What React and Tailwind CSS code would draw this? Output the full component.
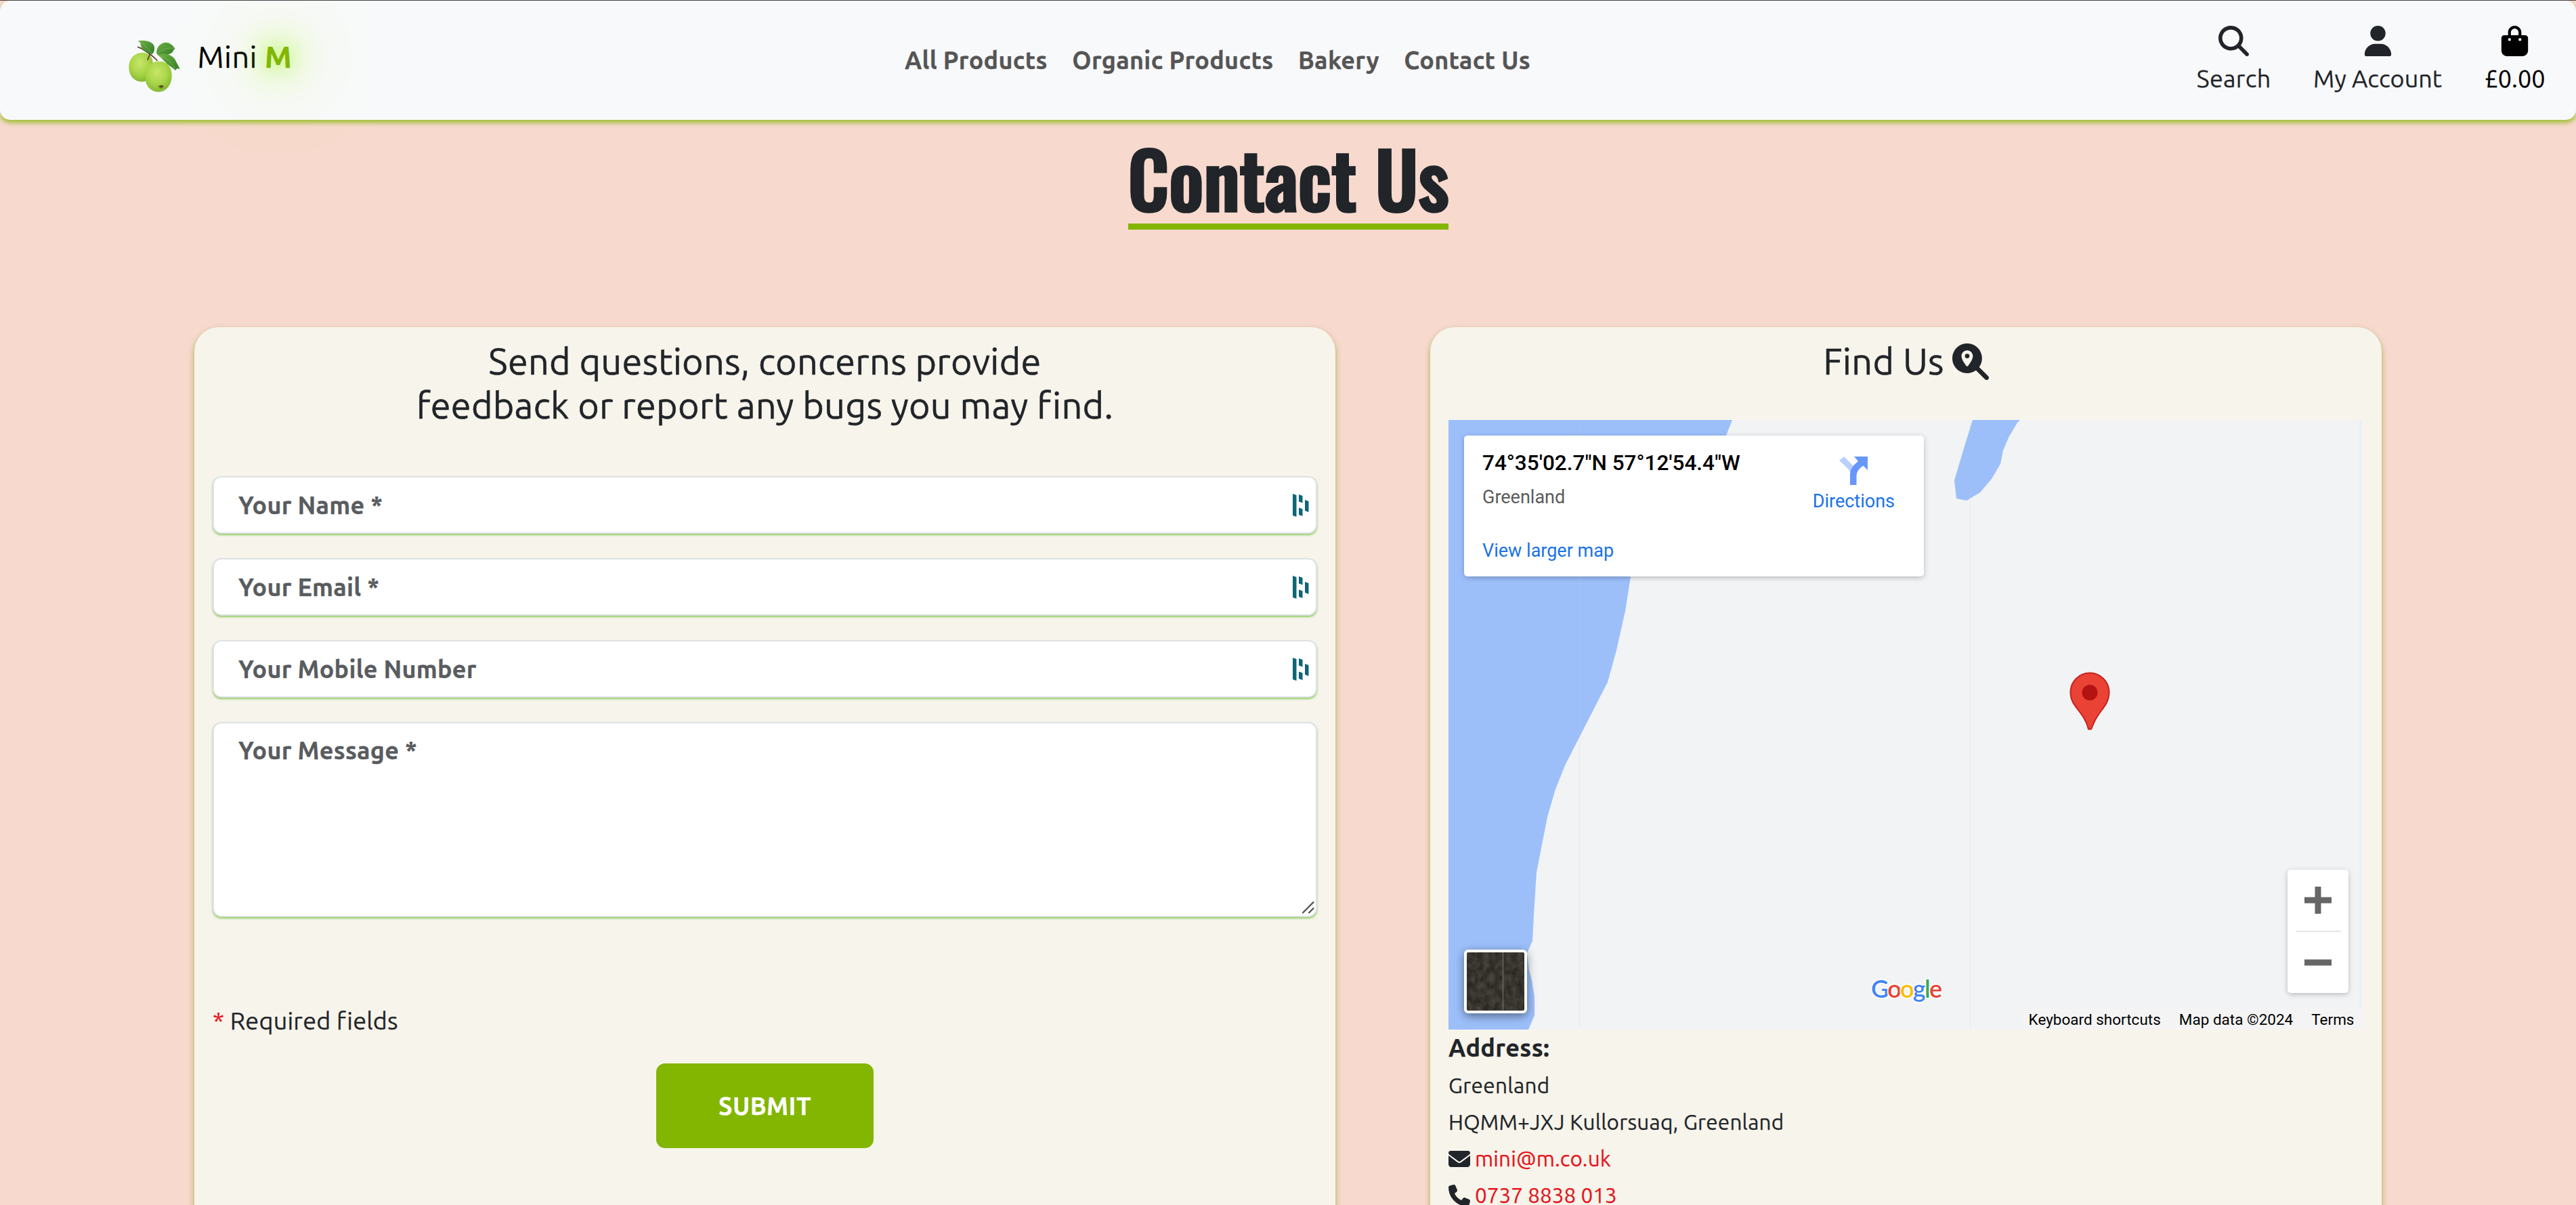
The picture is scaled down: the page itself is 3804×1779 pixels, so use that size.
import React from 'react';
import {
  FaMagnifyingGlass,
  FaUser,
  FaBagShopping,
  FaMagnifyingGlassLocation,
  FaEnvelope,
  FaPhone,
} from 'react-icons/fa6';

const NAV = ['All Products', 'Organic Products', 'Bakery', 'Contact Us'];

function AppleLogo() {
  return (
    <svg viewBox="30 28 228 231" className="mt-[58px] h-[77px] w-[76px]">
      <defs>
        <radialGradient id="apple" cx="0.45" cy="0.35" r="0.7">
          <stop offset="0" stopColor="#c8e66a" />
          <stop offset="0.55" stopColor="#a9d548" />
          <stop offset="1" stopColor="#7fb42e" />
        </radialGradient>
        <linearGradient id="leaf" x1="0" y1="0" x2="1" y2="1">
          <stop offset="0" stopColor="#6fb045" />
          <stop offset="1" stopColor="#2f7d27" />
        </linearGradient>
      </defs>
      <path d="M84 85c20-4 46 8 52 32 4 40-8 96-48 96-34 0-57-28-57-64 0-36 22-62 53-64z" fill="url(#apple)" />
      <path d="M160 124c34-6 60 18 61 60 1 42-24 74-58 74-36 0-60-28-60-68 0-38 22-66 57-66z" fill="url(#apple)" />
      <path d="M71 59l10 5M82 63c24 16 52 30 74 56M124 92l-10 24" stroke="#5d3a2c" strokeWidth="5" fill="none" strokeLinecap="round" />
      <path d="M71 32c34-6 70 4 73 28 2 14-4 26-10 31-26-2-52-22-52-50z" fill="url(#leaf)" />
      <path d="M154 90c-4-30 18-52 44-51 18 2 28 14 38 28-10 4-6 14-20 21-18 8-40 12-62 2z" fill="url(#leaf)" />
      <path d="M158 95c28-12 66-2 78 20 6 14 14 26 21 42l-12-4-8 10c-12-14-30-20-46-38-10-10-20-22-33-30z" fill="url(#leaf)" />
      <path d="M76 36c24 12 40 28 56 52M158 88c20-20 46-26 74-24M164 97c34 8 56 32 74 62" stroke="#9ccc6a" strokeWidth="1.6" fill="none" />
      <path d="M160 232c8-6 20-6 28 0-4 8-8 12-14 12s-12-4-14-12z" fill="#7a8f2c" />
      <path d="M166 232l8 8 10-8-8-2z" fill="#4c4420" />
    </svg>
  );
}

function Header() {
  return (
    <header className="flex h-[176px] shrink-0 rounded-[15px] bg-[#f8f9fb] shadow-[0_4px_7px_rgba(130,182,0,0.8)]">
      <div className="flex w-[1336px] pl-[190px]">
        <AppleLogo />
        <a className="ml-[25.500px] mt-[49px] h-[68px] text-[45px] leading-[67.500px] tracking-[0.45px] text-black">
          Mini{' '}
          <span className="font-bold text-[#82b600] [text-shadow:0_0_22px_rgba(173,255,47,0.55),0_0_45px_rgba(160,255,20,0.9),0_0_90px_#9dff00,0_0_135px_#9dff00,0_0_180px_#ffc860]">
            M
          </span>
        </a>
      </div>
      <nav className="flex items-center gap-[36.500px] font-bold tracking-[0.28px] text-[#555]">
        {NAV.map((item) => (
          <a key={item}>{item}</a>
        ))}
      </nav>
      <div className="ml-auto flex gap-[62.500px] pr-[45.500px] pt-[37px]">
        <a className="flex flex-col items-center gap-[6px]">
          <FaMagnifyingGlass className="size-[45px]" />
          <span className="tracking-[0.28px]">Search</span>
        </a>
        <a className="flex flex-col items-center gap-[6px]">
          <FaUser className="size-[45px]" />
          <span>My Account</span>
        </a>
        <a className="flex flex-col items-center gap-[6px] text-black">
          <FaBagShopping className="size-[45px]" />
          <span>£0.00</span>
        </a>
      </div>
    </header>
  );
}

function FieldMark() {
  return (
    <svg viewBox="0 0 24 34" className="h-[34px] w-[24px]" fill="#0e6575">
      <path d="M0 0l5.5 2v32L0 32zM9 1l5.5 2v10.500L9 11.500zM9 20.500l5.500 2V33L9 31zM18 9l5.500 2v16L18 25z" />
    </svg>
  );
}

const FIELD =
  'rounded-[13px] border-2 border-[#dee2e6] bg-white font-bold tracking-[0.22px] text-[#595c5f] shadow-[0_2px_3px_rgba(110,190,50,0.75)]';

function Field({ label }) {
  return (
    <label className={`flex h-[85px] items-center justify-between pl-[36px] pr-[10px] ${FIELD}`}>
      <span>{label}</span>
      <FieldMark />
    </label>
  );
}

const CARD =
  'flex flex-col rounded-t-[36px] bg-[#f7f4eb] px-[27px] pt-[18px] shadow-[0_4px_9px_rgba(120,155,10,0.65)]';

function ContactForm() {
  return (
    <form className={`w-[1685px] ${CARD}`}>
      <h2 className="text-center text-[54px] leading-[65px] tracking-[0.26px] [-webkit-text-stroke:0.5px_currentColor]">
        Send questions, concerns provide
        <br />
        feedback or report any bugs you may find.
      </h2>
      <div className="mt-[72px] flex flex-col gap-[36px]">
        <Field label="Your Name *" />
        <Field label="Your Email *" />
        <Field label="Your Mobile Number" />
        <div className={`relative h-[288px] pl-[36px] pt-[13px] ${FIELD}`}>
          Your Message *
          <svg viewBox="0 0 20 20" className="absolute bottom-[2px] right-[1px] size-[20px]" stroke="#555" strokeWidth="2.4" strokeLinecap="round">
            <path d="M2 17.500L17.500 2M11 17.500L17.500 11" />
          </svg>
        </div>
      </div>
      <p className="mt-[126px] tracking-[0.2px]">
        <span className="text-[#e5151d]">*</span> Required fields
      </p>
      <button
        type="button"
        className="mt-[36px] h-[125px] w-[321px] self-center rounded-[13px] bg-[#82b600] font-bold tracking-[0.5px] text-white"
      >
        SUBMIT
      </button>
    </form>
  );
}

function MapCanvas() {
  return (
    <svg viewBox="0 0 1351 900" className="absolute inset-0 h-full w-full">
      <rect width="1351" height="900" fill="#f1f3f5" />
      <path
        d="M0 0H419L410 23Q330 150 269 231L261 282L248 340L235 387L172 510L158 545L146 586L130 668L126.500 722L124 769L116 787L119 812L123 827L127 852V879L118 900H0Z"
        fill="#9cbffa"
      />
      <path
        d="M774 0L761 42L747 89L750 116L765 119L785 107L802 87L815 65L819 45L828 24L840 4L844 0Z"
        fill="#9cbffa"
      />
      <path d="M193.500 0V900M770.500 0V900M1346.500 0V900" stroke="#c8d2de" strokeOpacity="0.2" strokeWidth="1.200" />
      <path
        d="M947 373.500c16 0 28.500 13 28.500 28.500 0 16-10 24-17 35-6 9-8 17-9.500 19.500h-4c-1-4-3-11-9-20-8-12-17.500-19-17.500-34.500 0-15.500 12.500-28.500 28.500-28.500z"
        fill="#ea4335"
        stroke="#c5221f"
        strokeWidth="2"
      />
      <circle cx="947" cy="402.500" r="11.500" fill="#b31412" />
      <text
        x="624"
        y="853"
        textLength="105"
        fontFamily="Lato"
        fontSize="36"
        fontWeight="600"
        stroke="#fff"
        strokeOpacity="0.8"
        strokeWidth="4"
        paintOrder="stroke"
      >
        <tspan fill="#4285f4">G</tspan>
        <tspan fill="#ea4335">o</tspan>
        <tspan fill="#fbbc04">o</tspan>
        <tspan fill="#4285f4">g</tspan>
        <tspan fill="#34a853">l</tspan>
        <tspan fill="#ea4335">e</tspan>
      </text>
    </svg>
  );
}

function PlaceCard() {
  return (
    <div className="absolute left-[23px] top-[23px] flex h-[208px] w-[679px] justify-between rounded-[5px] bg-white pl-[27px] pr-[43px] text-[27px] leading-[36px] text-[#1a73e8] shadow-[0_2px_9px_-1px_rgba(0,0,0,0.3)]">
      <div className="flex flex-col pt-[23px]">
        <b className="text-[31.500px] font-medium leading-[36px] text-black">74°35'02.7"N 57°12'54.4"W</b>
        <span className="mt-[14px] text-[#5b5b5b]">Greenland</span>
        <a className="mt-[43px]">View larger map</a>
      </div>
      <a className="flex flex-col items-center pt-[31px]">
        <svg viewBox="0 0 42 42" className="size-[42px]">
          <path d="M0 6L7 0L20.500 13.500L22 18L16 23Q15 19 0 6Z" fill="#b9d0fd" />
          <path d="M16 42V26Q16 16 28 7L22 0H42V20L35.500 13.500Q25.500 20 25.500 28V42Z" fill="#6797fb" />
        </svg>
        <span className="mt-[6px]">Directions</span>
      </a>
    </div>
  );
}

function MapTypeThumb() {
  return (
    <div className="absolute left-[23px] top-[782px] h-[94px] w-[93px] overflow-hidden rounded-[6px] border-4 border-white bg-[#2b2823] shadow-[0_4px_14px_rgba(0,0,0,0.45)]">
      <svg viewBox="0 0 85 86" className="h-full w-full">
        <filter id="grain">
          <feTurbulence type="fractalNoise" baseFrequency="0.12 0.09" numOctaves="3" seed="4" />
          <feColorMatrix values="0 0 0 0 0.28  0 0 0 0 0.26  0 0 0 0 0.22  0.500 0 0 0 -0.12" />
        </filter>
        <rect width="85" height="86" filter="url(#grain)" />
        <path d="M53.500 0V86" stroke="#77756f" strokeWidth="1" />
      </svg>
    </div>
  );
}

function ZoomControl() {
  return (
    <div className="absolute left-[1239px] top-[664px] flex h-[182px] w-[90px] flex-col items-center rounded-[5px] bg-white shadow-[0_2px_9px_-1px_rgba(0,0,0,0.3)]">
      <button type="button" className="flex h-[90px] items-center">
        <svg viewBox="0 0 40 40" className="size-[40px]" fill="#666">
          <path d="M15.500 0h9v15.500H40v9H24.500V40h-9V24.500H0v-9h15.500z" />
        </svg>
      </button>
      <div className="h-[2px] w-[67px] bg-[#e6e6e6]" />
      <button type="button" className="flex h-[90px] items-center">
        <svg viewBox="0 0 40 40" className="size-[40px]" fill="#666">
          <path d="M0 15.500h40v9H0z" />
        </svg>
      </button>
    </div>
  );
}

function FindUs() {
  return (
    <section className={`w-[1405px] ${CARD}`}>
      <h2 className="flex h-[65px] items-center justify-center gap-[12px] text-[54px] leading-[65px] tracking-[0.3px] [-webkit-text-stroke:0.5px_currentColor]">
        Find Us
        <FaMagnifyingGlassLocation className="size-[54px]" />
      </h2>
      <div className="relative mt-[54px] h-[900px] w-[1351px] shrink-0 overflow-hidden font-['Roboto',sans-serif] [-webkit-text-stroke:0px]">
        <MapCanvas />
        <PlaceCard />
        <MapTypeThumb />
        <ZoomControl />
        <div className="absolute bottom-0 right-0 flex h-[31px] gap-[27px] bg-[#f4f4f4] pl-[10px] pr-[13.500px] text-[22.500px] leading-[32px] text-black">
          <span>Keyboard shortcuts</span>
          <span>Map data ©2024</span>
          <span>Terms</span>
        </div>
      </div>
      <address className="text-[31.500px] not-italic leading-[54px]">
        <p className="mb-[2px] text-[36px] font-bold tracking-[0.38px]">Address:</p>
        <p className="tracking-[0.35px]">Greenland</p>
        <p className="tracking-[0.22px]">HQMM+JXJ Kullorsuaq, Greenland</p>
        <p className="flex items-center gap-[7px]">
          <FaEnvelope className="size-[32px]" />
          <a className="tracking-[0.1px] text-[#e5151d]">mini@m.co.uk</a>
        </p>
        <p className="flex items-center gap-[7px]">
          <FaPhone className="size-[32px]" />
          <a className="text-[#e5151d]">0737 8838 013</a>
        </p>
      </address>
    </section>
  );
}

export default function App() {
  return (
    <div className="flex h-screen flex-col overflow-hidden border-t border-[#444] bg-[#f7d9ce] font-['Ubuntu','Noto_Sans',sans-serif] text-[36px] leading-[54px] text-[#212529] [-webkit-text-stroke:0.25px_currentColor]">
      <Header />
      <h1 className="mt-[20px] h-[142px] w-[473px] shrink-0 self-center whitespace-nowrap border-b-[9px] border-[#82b600] font-['Oswald','Liberation_Sans_Narrow',sans-serif] text-[112.500px] font-medium leading-[129px] [-webkit-text-stroke:3.500px_currentColor]">
        Contact Us
      </h1>
      <main className="ml-[287px] mt-[144px] flex shrink-0 gap-[140px]">
        <ContactForm />
        <FindUs />
      </main>
    </div>
  );
}
